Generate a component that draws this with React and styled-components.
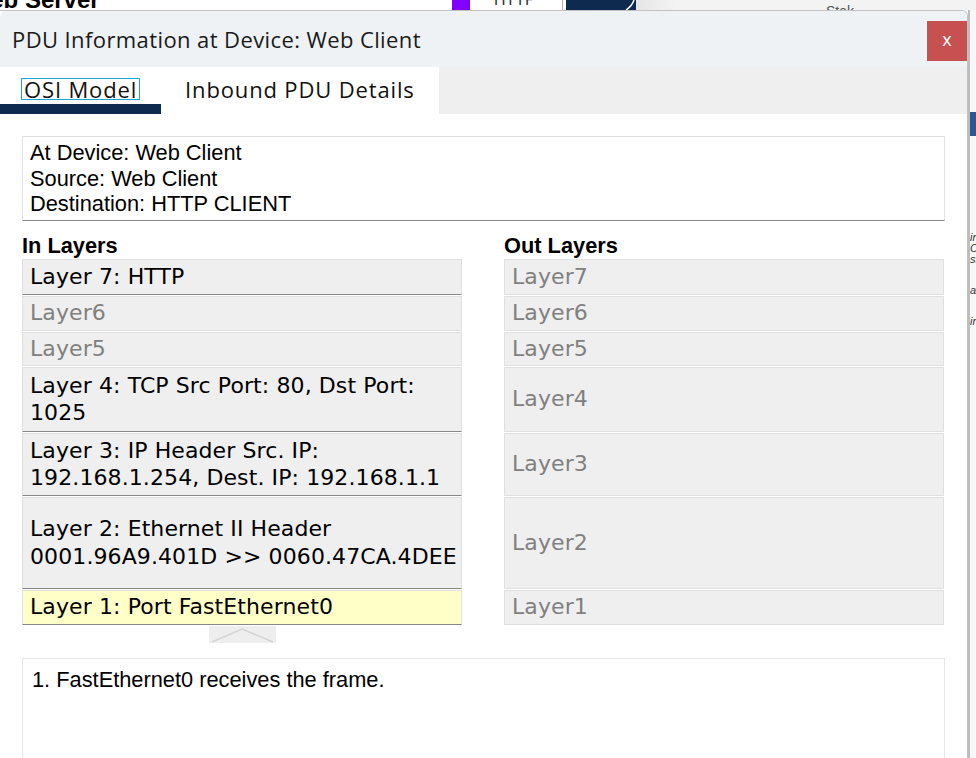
import React from 'react';
import styled, { createGlobalStyle } from 'styled-components';

const GlobalStyle = createGlobalStyle`
    html, body {
        margin: 0;
        padding: 0;
        background: #ffffff;
        overflow: hidden;
    }
`;

const inLayers = [
    { lines: ['Layer 7: HTTP'], active: true },
    { lines: ['Layer6'] },
    { lines: ['Layer5'] },
    { lines: ['Layer 4: TCP Src Port: 80, Dst Port:', '1025'], active: true },
    { lines: ['Layer 3: IP Header Src. IP:', '192.168.1.254, Dest. IP: 192.168.1.1'], active: true },
    { lines: ['Layer 2: Ethernet II Header', '0001.96A9.401D >> 0060.47CA.4DEE'], active: true },
    { lines: ['Layer 1: Port FastEthernet0'], active: true, selected: true }
];

const outLayers = ['Layer7', 'Layer6', 'Layer5', 'Layer4', 'Layer3', 'Layer2', 'Layer1'];

// row heights follow the in-layer content, out cells share them
const rowHeights = '36px 35px 34px 65px 63px 92px 35px';

export default function App () {
    return (
        <Page>
            <GlobalStyle/>
            <TopStrip>
                <AppTitle>Web Server</AppTitle>
                <Swatch/>
                <StripLabel>HTTP</StripLabel>
                <StripDivider/>
                <NavyBlock>
                    <svg width='70' height='10' viewBox='0 0 70 10'>
                        <path d='M68 0 Q 66 6 60 10' stroke='#ffffff' strokeWidth='1.5' fill='none'/>
                    </svg>
                </NavyBlock>
                <StripRest><StripHint>Stak</StripHint></StripRest>
            </TopStrip>
            <Body>
                <Dialog>
                    <Header>
                        <Title>PDU Information at Device: Web Client</Title>
                        <CloseButton>x</CloseButton>
                    </Header>
                    <TabBar>
                        <Tab $active>
                            <TabLabel $focused>OSI Model</TabLabel>
                        </Tab>
                        <Tab>
                            <TabLabel>Inbound PDU Details</TabLabel>
                        </Tab>
                        <TabFiller/>
                    </TabBar>
                    <Content>
                        <InfoBox>
                            <div>At Device: Web Client</div>
                            <div>Source: Web Client</div>
                            <div>Destination: HTTP CLIENT</div>
                        </InfoBox>
                        <Columns>
                            <Column>
                                <ColumnTitle>In Layers</ColumnTitle>
                                <LayerList style={{ gridTemplateRows: rowHeights }}>
                                    {inLayers.map((layer, i) => (
                                        <LayerCell key={i} $active={layer.active} $selected={layer.selected}>
                                            <div>
                                                {layer.lines.map((line) => <LayerLine key={line}>{line}</LayerLine>)}
                                            </div>
                                        </LayerCell>
                                    ))}
                                </LayerList>
                                <ArrowButton>
                                    <svg width='67' height='17' viewBox='0 0 67 17'>
                                        <polyline points='3,16 33,3 64,16' fill='none' stroke='#d4d4d4' strokeWidth='1.5'/>
                                    </svg>
                                </ArrowButton>
                            </Column>
                            <Column>
                                <ColumnTitle>Out Layers</ColumnTitle>
                                <LayerList style={{ gridTemplateRows: rowHeights }}>
                                    {outLayers.map((name) => (
                                        <LayerCell key={name}>
                                            <LayerLine>{name}</LayerLine>
                                        </LayerCell>
                                    ))}
                                </LayerList>
                            </Column>
                        </Columns>
                        <Description>1. FastEthernet0 receives the frame.</Description>
                    </Content>
                </Dialog>
                <SideStrip>
                    <SideBlue/>
                    <SideHint>in<br/>C<br/>ss</SideHint>
                    <SideHint>at</SideHint>
                    <SideHint>in</SideHint>
                </SideStrip>
            </Body>
        </Page>
    );
}

const Page = styled.div`
    width: 976px;
    height: 758px;
    display: flex;
    flex-direction: column;
    overflow: hidden;
    background: #ffffff;
`;

const TopStrip = styled.div`
    height: 10px;
    display: flex;
    align-items: flex-end;
    overflow: hidden;
    background: #ffffff;
`;

const AppTitle = styled.div`
    width: 440px;
    font-family: "Liberation Sans", Arial, sans-serif;
    font-weight: bold;
    font-size: 24px;
    line-height: 0px;
    height: 10px;
    margin-left: -32px;
    overflow: hidden;
    color: #000;
`;

const Swatch = styled.div`
    width: 18px;
    height: 10px;
    margin-left: 44px;
    background: #8000ff;
`;

const StripLabel = styled.div`
    width: 68px;
    height: 10px;
    padding-left: 24px;
    font-family: "Liberation Sans", Arial, sans-serif;
    font-size: 16px;
    line-height: 0px;
    overflow: hidden;
    color: #333;
`;

const StripDivider = styled.div`
    width: 1px;
    height: 10px;
    background: #b0b0b0;
    margin-right: 3px;
`;

const NavyBlock = styled.div`
    width: 70px;
    height: 10px;
    background: #0f2a4f;
    display: flex;
`;

const StripRest = styled.div`
    flex: 1;
    height: 10px;
    background: linear-gradient(to right, #e6e6e6 0, #f3f3f3 40px, #f3f3f3 100%);
    overflow: hidden;
`;

const StripHint = styled.span`
    display: block;
    margin-left: 190px;
    margin-top: 4px;
    font-family: "Liberation Sans", Arial, sans-serif;
    font-size: 14px;
    line-height: 14px;
    color: #555;
`;

const Body = styled.div`
    flex: 1;
    display: flex;
    min-height: 0;
`;

const Dialog = styled.div`
    width: 967px;
    display: flex;
    flex-direction: column;
    background: #ffffff;
    border: 1px solid #c2c2c2;
    border-left: none;
    border-bottom: none;
    border-radius: 0 6px 0 0;
    overflow: hidden;
`;

const Header = styled.div`
    height: 56px;
    flex: none;
    display: flex;
    align-items: center;
    justify-content: space-between;
    background: #eef2f5;
    padding-left: 12px;
    border-radius: 6px 6px 0 0;
`;

const Title = styled.div`
    font-family: "Open Sans", "Noto Sans", sans-serif;
    font-size: 22px;
    letter-spacing: 0.4px;
    color: #1a1a1a;
`;

const CloseButton = styled.div`
    width: 40px;
    height: 40px;
    margin-top: 4px;
    display: flex;
    align-items: center;
    justify-content: center;
    background: #c75050;
    color: #ffffff;
    font-family: "Open Sans", "Noto Sans", sans-serif;
    font-size: 18px;
    padding-bottom: 4px;
    box-sizing: border-box;
`;

const TabBar = styled.div`
    height: 47px;
    flex: none;
    display: flex;
`;

const Tab = styled.div`
    padding: 6px 24px 0 24px;
    display: flex;
    align-items: center;
    background: #ffffff;
    border-bottom: 10px solid ${props => props.$active ? '#0f2a4f' : '#ffffff'};
`;

const TabLabel = styled.span`
    font-family: "Open Sans", "Noto Sans", sans-serif;
    font-size: 22px;
    letter-spacing: 0.85px;
    line-height: 20px;
    color: #111;
    padding: 0 2px;
    outline: ${props => props.$focused ? '1px solid #1aa6d9' : 'none'};
    margin: 0 -2px;
`;

const TabFiller = styled.div`
    flex: 1;
    background: #efefef;
`;

const Content = styled.div`
    flex: 1;
    padding: 22px 22px 0 22px;
    display: flex;
    flex-direction: column;
`;

const InfoBox = styled.div`
    height: 85px;
    box-sizing: border-box;
    padding: 3px 7px;
    border: 1px solid #e2e2e2;
    border-bottom: 1px solid #8a8a8a;
    font-family: "Liberation Sans", Arial, sans-serif;
    font-size: 21.8px;
    line-height: 25.5px;
    color: #000;
`;

const Columns = styled.div`
    display: grid;
    grid-template-columns: 440px 440px;
    column-gap: 42px;
    margin-top: 11px;
`;

const Column = styled.div`
    display: flex;
    flex-direction: column;
`;

const ColumnTitle = styled.div`
    font-family: "Liberation Sans", Arial, sans-serif;
    font-weight: bold;
    font-size: 21.8px;
    line-height: 27px;
    color: #000;
`;

const LayerList = styled.div`
    display: grid;
    row-gap: 1px;
`;

const LayerCell = styled.div`
    display: flex;
    align-items: center;
    box-sizing: border-box;
    padding: 0 0 1px 7px;
    background: ${props => props.$selected ? '#ffffc8' : '#efefef'};
    border: 1px solid #e0e0e0;
    border-bottom-color: ${props => props.$active ? '#888888' : '#e0e0e0'};
    font-family: "DejaVu Sans", Verdana, sans-serif;
    font-size: 22px;
    letter-spacing: 0.1px;
    line-height: 27.5px;
    color: ${props => props.$active ? '#000000' : '#808080'};
    overflow: hidden;
`;

const LayerLine = styled.div`
    white-space: nowrap;
`;

const ArrowButton = styled.div`
    align-self: center;
    width: 67px;
    height: 17px;
    display: flex;
    background: #eeeeee;
    margin-top: 1px;
`;

const Description = styled.div`
    margin-top: 15px;
    flex: 1;
    border: 1px solid #e6e6e6;
    border-bottom: none;
    padding: 9px 9px;
    font-family: "Liberation Sans", Arial, sans-serif;
    font-size: 21.8px;
    line-height: 23px;
    color: #000;
`;

const SideStrip = styled.div`
    flex: 1;
    display: flex;
    flex-direction: column;
    background: #f8f8f8;
    border-left: 2px solid #bdbdbd;
    overflow: hidden;
`;

const SideBlue = styled.div`
    height: 24px;
    margin-top: 102px;
    background: #2b5797;
    margin-bottom: 96px;
`;

const SideHint = styled.div`
    font-family: "Liberation Sans", Arial, sans-serif;
    font-style: italic;
    font-size: 11px;
    line-height: 11px;
    color: #333;
    margin-bottom: 20px;
`;
